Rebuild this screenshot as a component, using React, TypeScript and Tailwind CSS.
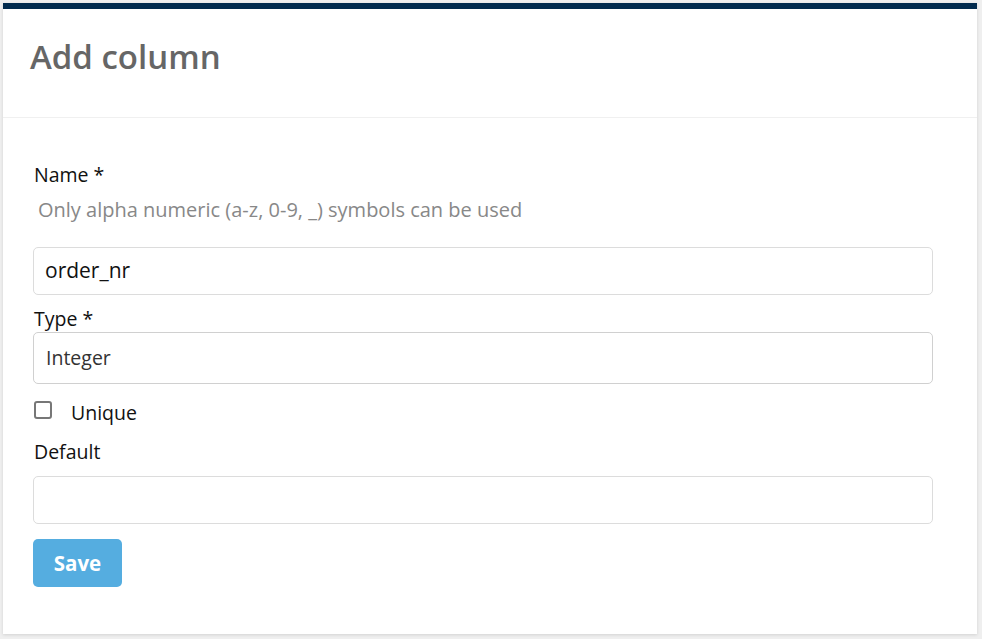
import React from "react";

export default function App() {
  return (
    <div className="w-[982px] h-[639px] bg-[#efefef] pt-[3px] pl-[3px] pr-[5px] pb-[5px] font-['Open_Sans',sans-serif]">
      <div className="h-[631px] bg-white border-t-[6px] border-[#022b4e] shadow-[0_1px_3px_rgba(0,0,0,0.12)] flex flex-col">
        <div className="h-[109px] border-b border-[#f0f0f0] flex items-start pl-[27px] pt-[26px]">
          <h1 className="text-[33px] leading-[44px] font-semibold text-[#666666]">Add column</h1>
        </div>
        <div className="pl-[30px] pt-[44px] flex flex-col">
          <label className="text-[19.5px] leading-[26px] text-[#111] pl-[1px]">Name *</label>
          <p className="text-[20px] leading-[28px] text-[#888] pl-[5px] mt-[8px]">
            Only alpha numeric (a-z, 0-9, _) symbols can be used
          </p>
          <div className="mt-[23px] w-[900px] h-[48px] border border-[#dcdcdc] rounded-[5px] flex items-center px-[11px] text-[21px] text-[#111]">
            order_nr
          </div>
          <label className="text-[19.5px] leading-[26px] text-[#111] pl-[1px] mt-[11px]">Type *</label>
          <div className="w-[900px] h-[52px] border border-[#d0d0d0] rounded-[5px] flex items-center px-[12px] text-[19.5px] text-[#333]">
            Integer
          </div>
          <div className="flex items-start mt-[17px]">
            <div className="ml-[1px] w-[18px] h-[18px] border-2 border-[#777] rounded-[3px]" />
            <span className="ml-[19px] -mt-[1px] text-[19.5px] text-[#111] leading-[26px]">Unique</span>
          </div>
          <label className="text-[19.5px] leading-[26px] text-[#111] pl-[1px] mt-[13px]">Default</label>
          <div className="mt-[11px] w-[900px] h-[48px] border border-[#dcdcdc] rounded-[5px]" />
          <button className="mt-[15px] w-[89px] h-[48px] pt-[1px] rounded-[5px] bg-[#55ade0] text-white text-[20.5px] font-bold">
            Save
          </button>
        </div>
      </div>
    </div>
  );
}
